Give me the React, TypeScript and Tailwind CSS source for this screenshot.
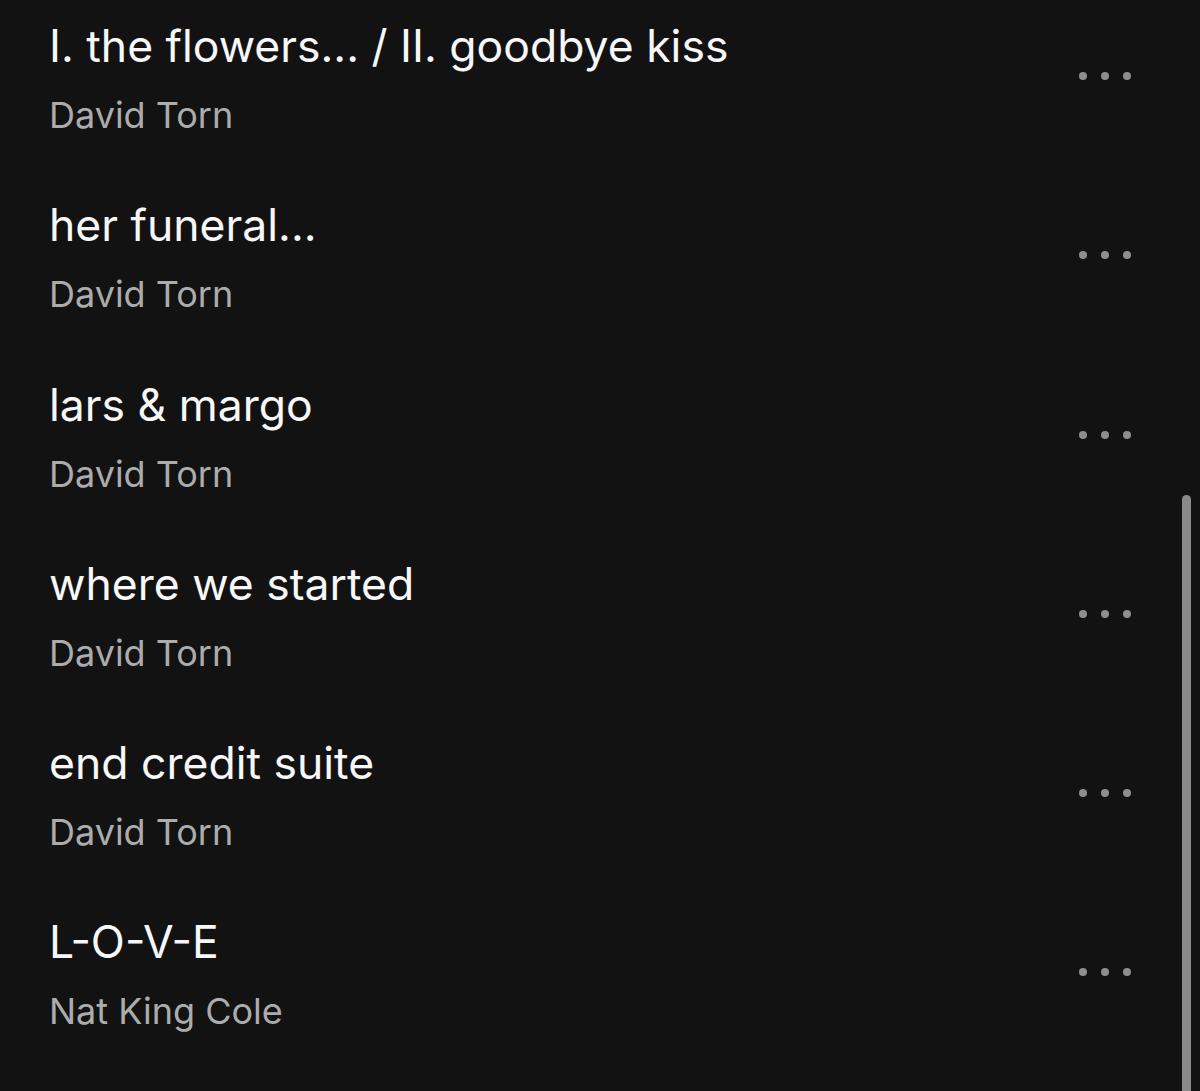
import React from "react";

type Track = { title: string; artist: string };

const tracks: Track[] = [
  { title: "I. the flowers... / II. goodbye kiss", artist: "David Torn" },
  { title: "her funeral...", artist: "David Torn" },
  { title: "lars & margo", artist: "David Torn" },
  { title: "where we started", artist: "David Torn" },
  { title: "end credit suite", artist: "David Torn" },
  { title: "L-O-V-E", artist: "Nat King Cole" },
];

function MoreDots() {
  return (
    <div className="flex items-center gap-[14px] mt-[54px] mr-[69px]">
      <span className="block w-[8px] h-[8px] rounded-full bg-[#8e8e8e]" />
      <span className="block w-[8px] h-[8px] rounded-full bg-[#8e8e8e]" />
      <span className="block w-[8px] h-[8px] rounded-full bg-[#8e8e8e]" />
    </div>
  );
}

function TrackRow({ track }: { track: Track }) {
  return (
    <div className="flex items-start justify-between h-[179.3px]">
      <div className="flex flex-col pl-[49px]">
        <div className="text-[44.5px] leading-[56px] text-[#f7f7f7] whitespace-nowrap">
          {track.title}
        </div>
        <div className="mt-[21px] text-[36px] leading-[40px] text-[#acacac] whitespace-nowrap">
          {track.artist}
        </div>
      </div>
      <MoreDots />
    </div>
  );
}

export default function App() {
  return (
    <div
      className="relative w-[1200px] h-[1091px] overflow-hidden bg-[#121212]"
      style={{ fontFamily: "Inter, 'Noto Sans', sans-serif" }}
    >
      <div className="pt-[18px]">
        {tracks.map((t) => (
          <TrackRow key={t.title} track={t} />
        ))}
      </div>
      {/* overlay scrollbar thumb */}
      <div className="absolute left-[1182px] top-[495px] w-[9px] h-[620px] rounded-full bg-[#8a8a8a]" />
    </div>
  );
}
